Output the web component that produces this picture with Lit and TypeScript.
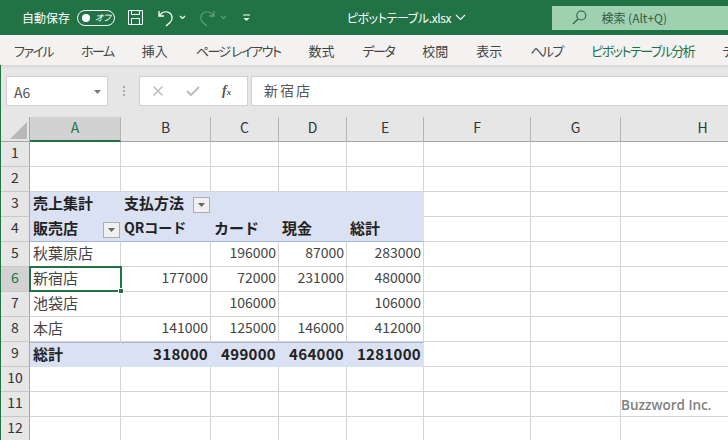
import { LitElement, css, html, svg } from 'lit'
import { customElement } from 'lit/decorators.js'
import { classMap } from 'lit/directives/class-map.js'

const COLUMNS = ['A', 'B', 'C', 'D', 'E', 'F', 'G', 'H']
const TABS = ['ファイル', 'ホーム', '挿入', 'ページ レイアウト', '数式', 'データ', '校閲', '表示', 'ヘルプ', 'ピボットテーブル分析', 'デザイン']
const KANJI_TABS = ['挿入', '数式', '校閲', '表示']

interface Row {
  cells?: string[]
  kind?: 'head' | 'headLast' | 'total'
  filter?: number
}

// cell text by column A..E
const ROWS: Row[] = [
  {},
  {},
  { cells: ['売上集計', '支払方法'], kind: 'head', filter: 1 },
  { cells: ['販売店', 'QRコード', 'カード', '現金', '総計'], kind: 'headLast', filter: 0 },
  { cells: ['秋葉原店', '', '196000', '87000', '283000'] },
  { cells: ['新宿店', '177000', '72000', '231000', '480000'] },
  { cells: ['池袋店', '', '106000', '', '106000'] },
  { cells: ['本店', '141000', '125000', '146000', '412000'] },
  { cells: ['総計', '318000', '499000', '464000', '1281000'], kind: 'total' },
  {},
  {},
  {},
]

const chevron = (stroke: string) => svg`<path d="M1 1l2.5 2.5L6 1" fill="none" stroke=${stroke} stroke-width="1.1"/>`

@customElement('app-root')
export class AppRoot extends LitElement {
  private titleBar() {
    return html`
      <header class="title">
        <span class="autosave">自動保存</span>
        <span class="toggle"><i></i><em>オフ</em></span>
        <svg class="save" width="17" height="17" viewBox="0 0 17 17" fill="none" stroke="#fff" stroke-width="1">
          <path d="M1.500 1.500h14v14h-14zM4.500 1.500v4h8v-4M4.500 15.500v-6h8v6" />
        </svg>
        <svg class="undo" width="16" height="18" viewBox="0 0 16 18" fill="none" stroke="#fff" stroke-width="1.300">
          <path d="M1 2v5h5M1.500 6.500C4 3 8 2 11 3.500c4 2.200 4 7.500 1 10L8 17" />
        </svg>
        <svg class="chev" width="7" height="5" viewBox="0 0 7 5">${chevron('#fff')}</svg>
        <svg class="redo" width="16" height="18" viewBox="0 0 16 18" fill="none" stroke="#5f9c7c" stroke-width="1.300">
          <path d="M15 2v5h-5M14.500 6.500C12 3 8 2 5 3.500c-4 2.200-4 7.500-1 10L8 17" />
        </svg>
        <svg class="chev" width="7" height="5" viewBox="0 0 7 5">${chevron('#5f9c7c')}</svg>
        <svg class="custom" width="7" height="8" viewBox="0 0 7 8">
          <path d="M0 1h7" stroke="#fff" stroke-width="1" />
          <path d="M0.500 4l3 3 3-3z" fill="#fff" />
        </svg>
        <span class="file">ピボットテーブル.xlsx</span>
        <svg class="file-chev" width="11" height="7" viewBox="0 0 11 7" fill="none" stroke="#fff" stroke-width="1.100">
          <path d="M1 1l4.500 4.500L10 1" />
        </svg>
        <div class="search">
          <svg width="15" height="15" viewBox="0 0 15 15" fill="none" stroke="#2a5a40" stroke-width="1.100">
            <circle cx="9.300" cy="5.500" r="4.500" />
            <path d="M6 9L1 14" />
          </svg>
          <span>検索 (Alt+Q)</span>
        </div>
      </header>
    `
  }

  private formulaBar() {
    return html`
      <div class="formula">
        <div class="namebox">
          <span>A6</span>
          <svg width="7" height="4" viewBox="0 0 7 4"><path d="M0 0h7L3.500 4z" fill="#7a7a7a" /></svg>
        </div>
        <div class="grip"><i></i><i></i><i></i></div>
        <div class="buttons">
          <svg width="12" height="12" viewBox="0 0 12 12" fill="none" stroke="#bdbdbd" stroke-width="1.500">
            <path d="M1.500 1.500l9 9M10.500 1.500l-9 9" />
          </svg>
          <svg width="14" height="12" viewBox="0 0 14 12" fill="none" stroke="#bdbdbd" stroke-width="2">
            <path d="M1 6l4 4 8-8" />
          </svg>
          <span class="fx">f<sub>x</sub></span>
        </div>
        <div class="input">新宿店</div>
      </div>
    `
  }

  private row(row: Row, index: number) {
    const num = index + 1
    return html`
      <div class=${classMap({ rowhead: true, active: num === 6 })}>${num}</div>
      ${COLUMNS.map((_, c) => {
        const text = row.cells?.[c] ?? ''
        const inPivot = c < 5
        const classes = {
          cell: true,
          numeric: /^\d+$/.test(text),
          qr: text.startsWith('QR'),
          pivot: inPivot && !!row.kind,
          bold: inPivot && !!row.kind,
          headLast: inPivot && row.kind === 'headLast',
          total: inPivot && row.kind === 'total',
          selected: num === 6 && c === 0,
          last: c === COLUMNS.length - 1,
        }
        return html`
          <div class=${classMap(classes)}>
            <span>${text}</span>
            ${row.filter === c ? html`<b class="filter"><svg width="7" height="4" viewBox="0 0 7 4"><path d="M0 0h7L3.500 4z" fill="#666" /></svg></b>` : ''}
            ${num === 6 && c === 0 ? html`<div class="selection"></div>` : ''}
          </div>
        `
      })}
    `
  }

  private sheet() {
    return html`
      <div class="sheet">
        <div class="corner"><svg width="17" height="17" viewBox="0 0 17 17"><path d="M17 0v17H0z" fill="#b8b8b8" /></svg></div>
        ${COLUMNS.map(
          (c, i) => html`<div class=${classMap({ colhead: true, active: i === 0 })}>${c}</div>`,
        )}
        ${ROWS.map((r, i) => this.row(r, i))}
        <div class="mark">Buzzword Inc.</div>
      </div>
    `
  }

  protected render() {
    return html`
      ${this.titleBar()}
      <nav class="tabs">
        ${TABS.map(
          (t, i) => html`<span class=${classMap({ on: i === 9, kana: !KANJI_TABS.includes(t) })}>${t}</span>`,
        )}
      </nav>
      <div class="body">${this.formulaBar()} ${this.sheet()}</div>
    `
  }

  static styles = css`
    :host {
      display: block;
      width: 728px;
      height: 440px;
      overflow: hidden;
      background: #fff;
      color: #333;
      font-family: 'Noto Sans CJK JP', 'Liberation Sans', sans-serif;
      font-feature-settings: 'palt';
    }

    .title {
      height: 35px;
      background: #217346;
      color: #fff;
      display: flex;
      align-items: center;
      font-size: 12px;
      white-space: nowrap;
    }
    .autosave {
      margin-left: 22px;
      width: 48px;
    }
    .toggle {
      margin-left: 7px;
      width: 38px;
      height: 16px;
      box-sizing: border-box;
      border: 1px solid #fff;
      border-radius: 8px;
      display: flex;
      align-items: center;
      padding-left: 4px;
      gap: 5px;
    }
    .toggle i {
      width: 8px;
      height: 8px;
      border-radius: 50%;
      background: #fff;
    }
    .toggle em {
      font-size: 9px;
      line-height: 14px;
    }
    .save {
      margin-left: 12px;
    }
    .undo {
      margin-left: 14px;
    }
    .chev {
      margin-left: 5px;
    }
    .redo {
      margin-left: 13px;
    }
    .custom {
      margin-left: 16px;
    }
    .file {
      margin-left: 97px;
      font-size: 12px;
      width: 106px;
      letter-spacing: -0.4px;
    }
    .file-chev {
      margin-left: 3px;
    }
    .search {
      margin-left: 86px;
      width: 176px;
      height: 24px;
      background: #9fd0b0;
      color: #2f5c43;
      display: flex;
      align-items: center;
      padding-left: 20px;
      gap: 14px;
      box-sizing: border-box;
    }

    .tabs {
      height: 30px;
      background: #f3f2f1;
      display: flex;
      align-items: center;
      gap: 28px;
      padding-left: 14px;
      font-size: 13px;
      color: #444;
      white-space: nowrap;
      overflow: hidden;
    }
    .tabs .kana {
      letter-spacing: -1.5px;
    }
    .tabs .on {
      color: #217346;
    }

    .body {
      border-left: 1px solid #217346;
      background: #e6e6e6;
      height: 375px;
    }
    .formula {
      height: 52px;
      box-sizing: border-box;
      padding: 11px 0 0 5px;
      background: linear-gradient(#d8d8d8, #e6e6e6 4px);
      display: flex;
      align-items: flex-start;
    }
    .namebox,
    .buttons,
    .input {
      height: 30px;
      box-sizing: border-box;
      background: #fff;
      border: 1px solid #d0d0d0;
      display: flex;
      align-items: center;
    }
    .namebox {
      width: 102px;
      padding: 2px 6px 0 7px;
      justify-content: space-between;
      font-size: 14px;
      color: #555;
    }
    .grip {
      width: 31px;
      height: 30px;
      display: flex;
      flex-direction: column;
      align-items: center;
      justify-content: center;
      gap: 2px;
    }
    .grip i {
      width: 2px;
      height: 2px;
      background: #a8a8a8;
    }
    .buttons {
      width: 109px;
      padding-left: 12px;
      gap: 22px;
    }
    .fx {
      font-family: 'Liberation Serif', serif;
      font-style: italic;
      font-weight: 700;
      font-size: 14px;
      color: #555;
    }
    .fx sub {
      font-size: 9px;
      vertical-align: baseline;
    }
    .input {
      margin-left: 3px;
      flex: 1;
      border-right: none;
      padding: 0 0 3px 12px;
      font-size: 14px;
      letter-spacing: 2px;
      color: #555;
    }

    .sheet {
      position: relative;
      display: grid;
      grid-template-columns: 29px 91px 90px 68px 68px 77px 107px 90px 164px;
      grid-template-rows: repeat(13, 25px);
      background: #fff;
      font-size: 15px;
      line-height: 21px;
    }
    .corner,
    .colhead,
    .rowhead {
      background: #e6e6e6;
      box-sizing: border-box;
      color: #333;
      text-align: center;
    }
    .corner {
      border-right: 1px solid #a6a6a6;
      border-bottom: 1px solid #a6a6a6;
      display: flex;
      align-items: flex-end;
      justify-content: flex-end;
      padding: 0 2px 2px 0;
    }
    .colhead {
      border-right: 1px solid #b4b4b4;
      border-bottom: 1px solid #a6a6a6;
      font-size: 14px;
    }
    .colhead.active {
      background: #d2d2d2;
      color: #217346;
      border-bottom: 2px solid #217346;
      border-right-color: #b4b4b4;
    }
    .rowhead {
      border-right: 1px solid #a6a6a6;
      border-bottom: 1px solid #c8c8c8;
      font-size: 14px;
    }
    .rowhead.active {
      background: #d2d2d2;
      color: #217346;
    }
    .cell {
      position: relative;
      box-sizing: border-box;
      border-right: 1px solid #d4d4d4;
      border-bottom: 1px solid #d4d4d4;
      padding: 0 2px 0 3px;
      white-space: nowrap;
      color: #444;
      font-feature-settings: normal;
    }
    .cell.numeric {
      text-align: right;
      font-size: 14px;
    }
    .cell.qr {
      font-size: 14px;
    }
    .cell.pivot {
      background: #d9e1f2;
      border-right-color: #d9e1f2;
      border-bottom-color: #d9e1f2;
      color: #222;
    }
    .cell.bold {
      font-weight: 700;
    }
    .cell.headLast {
      border-bottom-color: #9fb4d8;
    }
    .cell.total {
      border-top: 1px solid #a9bad6;
    }
    .cell.total.numeric {
      font-size: 15px;
      letter-spacing: 0.3px;
    }
    .cell.last {
      border-right: none;
    }
    .cell.selected {
      z-index: 2;
    }
    .filter {
      position: absolute;
      right: 0;
      top: 5px;
      width: 17px;
      height: 16px;
      box-sizing: border-box;
      background: #f0f0f0;
      border: 1px solid #acacac;
      display: flex;
      align-items: center;
      justify-content: center;
    }
    .selection {
      position: absolute;
      left: -1px;
      top: -1px;
      right: -2px;
      bottom: -1px;
      border: 2px solid #217346;
    }
    .selection::after {
      content: '';
      position: absolute;
      right: -4px;
      bottom: -4px;
      width: 6px;
      height: 6px;
      background: #217346;
      border: 1px solid #fff;
      box-sizing: border-box;
    }
    .mark {
      position: absolute;
      left: 620px;
      top: 279px;
      font-family: 'Open Sans', sans-serif;
      font-weight: 600;
      font-size: 13.5px;
      line-height: 18px;
      color: #808080;
    }
  `
}
